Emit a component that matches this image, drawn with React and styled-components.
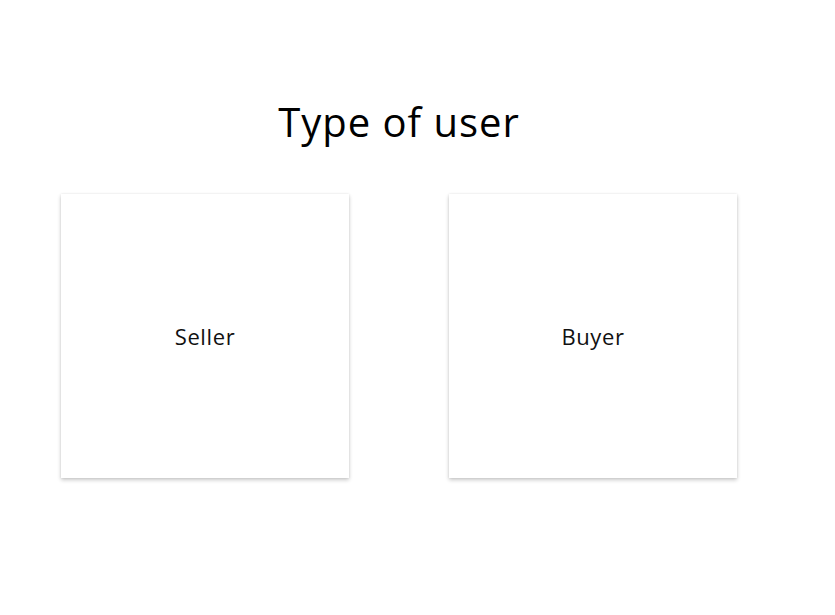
import React from "react";
import styled, { createGlobalStyle } from "styled-components";

const GlobalStyle = createGlobalStyle`
  body {
    margin: 0;
    background: #ffffff;
    font-family: "Open Sans", "Liberation Sans", sans-serif;
    color: #000;
  }
`;

const Page = styled.div`
  width: 676px;
  padding: 92px 0 80px 61px;
`;

const Title = styled.h1`
  margin: 0 0 42px;
  font-size: 40px;
  font-weight: 400;
  line-height: 60px;
  text-align: center;
  letter-spacing: 1px;
`;

const Row = styled.div`
  display: flex;
  gap: 100px;
`;

const Card = styled.button`
  width: 288px;
  height: 284px;
  display: flex;
  align-items: center;
  justify-content: center;
  background: #fff;
  border: none;
  box-shadow: 0 2px 4px rgba(0, 0, 0, 0.22), 0 0 2px rgba(0, 0, 0, 0.08);
  font-family: inherit;
  font-size: 22px;
  letter-spacing: 0.6px;
  color: #111;
  cursor: pointer;
  padding: 0;
`;

const App = () => {
  return (
    <>
      <GlobalStyle />
      <Page>
        <Title>Type of user</Title>
        <Row>
          <Card>Seller</Card>
          <Card>Buyer</Card>
        </Row>
      </Page>
    </>
  );
};

export default App;
